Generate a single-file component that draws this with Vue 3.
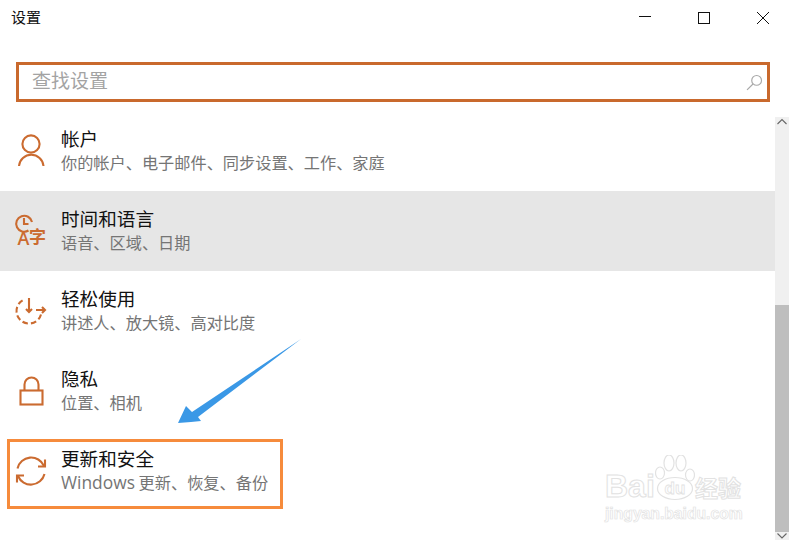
<script setup>
const rows = [
  { key: 'user', title: '帐户', sub: '你的帐户、电子邮件、同步设置、工作、家庭' },
  { key: 'time', title: '时间和语言', sub: '语音、区域、日期', active: true },
  { key: 'ease', title: '轻松使用', sub: '讲述人、放大镜、高对比度' },
  { key: 'lock', title: '隐私', sub: '位置、相机' },
  { key: 'sync', title: '更新和安全', latin: 'Windows', sub: ' 更新、恢复、备份' },
]
</script>

<template>
  <div class="window">
    <header class="titlebar">
      <span class="app-title">设置</span>
      <div class="controls">
        <svg class="ctl" viewBox="0 0 14 14"><path d="M1 5.5H13" /></svg>
        <svg class="ctl" viewBox="0 0 14 14"><rect x="1.5" y="1.5" width="11" height="11" /></svg>
        <svg class="ctl" viewBox="0 0 14 14"><path d="M1 1L13 13M13 1L1 13" /></svg>
      </div>
    </header>

    <div class="search">
      <span class="placeholder">查找设置</span>
      <svg class="search-icon" viewBox="0 0 16 16"><circle cx="10" cy="6" r="4.6" /><path d="M6.6 9.4L1 15" /></svg>
    </div>

    <div class="body">
      <ul class="list">
        <li v-for="row in rows" :key="row.key" class="row" :class="{ active: row.active }">
          <svg class="icon" viewBox="0 0 36 36">
            <template v-if="row.key === 'user'">
              <circle cx="17" cy="11" r="8.6" />
              <path d="M5 33A12.3 12.3 0 0 1 29.5 33" />
            </template>
            <template v-else-if="row.key === 'time'">
              <path d="M14.5 17.5A8 8 0 1 1 18 9" />
              <path d="M10 5V11H14.5" />
              <text x="3.5" y="32" class="glyph-a">A</text>
              <text x="15" y="30" class="glyph-zi">字</text>
            </template>
            <template v-else-if="row.key === 'ease'">
              <path d="M27 21.5A12.5 12.5 0 1 1 11 6.2" stroke-dasharray="5.5 3" />
              <path d="M15 5V19M12 16L15 19L18 16" />
              <path d="M22 17H31M28 14L31 17L28 20" />
            </template>
            <template v-else-if="row.key === 'lock'">
              <rect x="6.5" y="17.5" width="22" height="14" />
              <path d="M10.5 17V11.5A7 7 0 0 1 24.5 11.5V17" />
            </template>
            <template v-else>
              <path d="M3.5 15.5A14 14 0 0 1 30 13" />
              <path d="M31 6.5V13.5H24" />
              <path d="M30.5 21A14 14 0 0 1 4 23" />
              <path d="M3 29.5V22.5H10" />
            </template>
          </svg>
          <div class="texts">
            <div class="title">{{ row.title }}</div>
            <div class="sub"><span v-if="row.latin" class="latin">{{ row.latin }}</span>{{ row.sub }}</div>
          </div>
        </li>
      </ul>

      <div class="scrollbar">
        <div class="arrow">
          <svg viewBox="0 0 14 10"><path d="M2.5 7L7 2.5L11.5 7" /></svg>
        </div>
        <div class="track"></div>
        <div class="thumb"></div>
        <div class="arrow arrow-down">
          <svg viewBox="0 0 14 8"><path d="M2.5 1.5L7 6L11.5 1.5" /></svg>
        </div>
      </div>
    </div>

    <div class="highlight"></div>

    <svg class="pointer" viewBox="0 0 130 90">
      <polygon points="127,1 24,79 27,83 17,84 4,85 12,68 18,74" />
    </svg>

    <div class="watermark">
      <div class="brand">
        <span class="wm-text">Bai</span>
        <svg class="paw" viewBox="0 0 40 46">
          <ellipse cx="14" cy="8" rx="5" ry="8" />
          <ellipse cx="26" cy="8" rx="5" ry="8" />
          <ellipse cx="5" cy="18" rx="4.5" ry="6" />
          <ellipse cx="35" cy="20" rx="4.5" ry="6" />
          <ellipse cx="20" cy="33.5" rx="17.5" ry="11" />
          <text x="20" y="39" class="paw-text">du</text>
        </svg>
        <span class="wm-text wm-cn">经验</span>
      </div>
      <div class="wm-url">jingyan.baidu.com</div>
    </div>
  </div>
</template>

<style>
html, body { margin: 0; background: #fff; }
</style>

<style scoped>
.window {
  position: relative;
  width: 789px;
  height: 540px;
  overflow: hidden;
  background: #fff;
  font-family: "Noto Sans CJK SC", "Liberation Sans", sans-serif;
  color: #000;
}
.titlebar {
  height: 37px;
  display: flex;
  align-items: flex-start;
  justify-content: space-between;
  padding-left: 11px;
}
.app-title { font-size: 15px; line-height: 33px; color: #111; }
.controls { display: flex; gap: 45px; padding: 11px 19px 0 0; }
.ctl { width: 14px; height: 14px; fill: none; stroke: #111; stroke-width: 1; }
.search {
  box-sizing: border-box;
  margin: 25px 19px 0 16px;
  height: 40px;
  border: 3px solid #c9692d;
  display: flex;
  align-items: center;
  justify-content: space-between;
  padding: 0 4px 0 13px;
}
.placeholder { font-size: 19px; color: #a3a3a3; line-height: 30px; margin-bottom: 4px; }
.search-icon { width: 17px; height: 17px; fill: none; stroke: #a8a8a8; stroke-width: 1.1; }
.body {
  margin-top: 9px;
  display: grid;
  grid-template-columns: 775px 14px;
}
.list { list-style: none; margin: 0; padding: 0; }
.row {
  height: 80px;
  box-sizing: border-box;
  display: flex;
  align-items: center;
  padding-left: 14px;
}
.row.active { background: #e6e6e6; }
.icon {
  width: 36px;
  height: 36px;
  margin-right: 11px;
  flex: none;
  fill: none;
  stroke: #cb6b30;
  stroke-width: 2.1;
  overflow: visible;
}
.glyph-a {
  font: 600 18px "Open Sans", "Liberation Sans", sans-serif;
  fill: #cb6b30;
  stroke: none;
}
.glyph-zi {
  font: 700 17px "Noto Sans CJK SC", sans-serif;
  fill: #cb6b30;
  stroke: none;
}
.texts { padding-bottom: 3px; }
.title { font-size: 18.6px; line-height: 24px; color: #111; }
.sub {
  font-family: "Noto Sans CJK SC", sans-serif;
  font-size: 16.2px;
  line-height: 24px;
  color: #757575;
  white-space: pre;
}
.latin { font-family: "Open Sans", sans-serif; font-size: 17.4px; line-height: 20px; }
.scrollbar {
  margin-top: 6px;
  height: 423px;
  display: flex;
  flex-direction: column;
  background: #f0f0f0;
}
.arrow { height: 18px; flex: none; }
.arrow svg { display: block; width: 14px; fill: none; stroke: #666; stroke-width: 1.1; }
.track { height: 170px; flex: none; }
.thumb { height: 227px; flex: none; background: #bebebe; }
.arrow-down { height: 8px; }
.highlight {
  position: absolute;
  left: 7px;
  top: 439px;
  width: 276px;
  height: 70px;
  box-sizing: border-box;
  border: 3px solid #f68b3c;
}
.pointer {
  position: absolute;
  left: 174px;
  top: 338px;
  width: 130px;
  height: 90px;
  fill: #3a98e6;
}
.watermark {
  position: absolute;
  left: 605px;
  top: 454px;
  width: 140px;
}
.brand { display: flex; align-items: flex-end; height: 47px; }
.wm-text {
  font: 700 32px "Liberation Sans", sans-serif;
  line-height: 30px;
  color: #fff;
  -webkit-text-stroke: 1px #e2e2e2;
  width: 49px;
}
.paw {
  width: 40px;
  height: 46px;
  flex: none;
  margin-left: 1px;
  fill: #fff;
  stroke: #e2e2e2;
  stroke-width: 1.2;
}
.paw-text {
  font: 700 17px "Liberation Sans", sans-serif;
  text-anchor: middle;
  stroke-width: 0.8;
  fill: #fff;
}
.wm-cn {
  font: 700 23px "Noto Sans CJK SC", sans-serif;
  line-height: 28px;
  white-space: nowrap;
  width: auto;
  margin-left: 0;
}
.wm-url {
  margin-top: 4px;
  font: 700 15.7px "Liberation Sans", sans-serif;
  line-height: 18px;
  color: #fff;
  -webkit-text-stroke: 0.7px #e2e2e2;
  white-space: nowrap;
}
</style>
